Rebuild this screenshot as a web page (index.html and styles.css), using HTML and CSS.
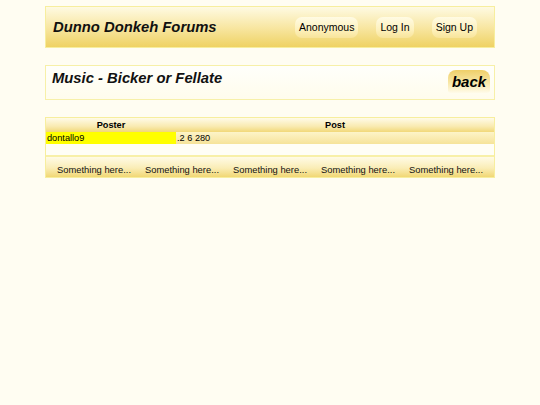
FILE: index.html
```html
<!DOCTYPE html>
<html>
<head>
<meta charset="utf-8">
<link rel="stylesheet" href="styles.css">
</head>
<body>
<div class="page">
  <header class="topbar">
    <h1 class="site-title">Dunno Donkeh Forums</h1>
    <nav class="nav">
      <span class="pill">Anonymous</span>
      <span class="pill">Log In</span>
      <span class="pill">Sign Up</span>
    </nav>
  </header>

  <section class="thread-head">
    <h2 class="thread-title">Music - Bicker or Fellate</h2>
    <span class="back">back</span>
  </section>

  <section class="posts">
    <div class="posts-head">
      <div class="col-poster">Poster</div>
      <div class="col-post">Post</div>
    </div>
    <div class="post-row">
      <div class="poster-cell">dontallo9</div>
      <div class="post-cell">.2 6 280</div>
    </div>
    <div class="post-blank"></div>
    <div class="posts-foot">
      <div>Something here...</div>
      <div>Something here...</div>
      <div>Something here...</div>
      <div>Something here...</div>
      <div>Something here...</div>
    </div>
  </section>
</div>
</body>
</html>
```

FILE: styles.css
```css
html, body {
  margin: 0;
  padding: 0;
  background: #fffdf2;
}
body {
  font-family: "Liberation Sans", Arial, sans-serif;
  color: #000;
}
.page {
  width: 450px;
  margin: 6px auto 0;
}
.topbar {
  box-sizing: border-box;
  height: 42px;
  border: 1px solid #f7ee9e;
  background: linear-gradient(to bottom, #fefae2 0%, #f8e7a4 50%, #efd263 100%);
  display: flex;
  align-items: center;
  justify-content: space-between;
  padding: 0 17px 0 7px;
}
.site-title {
  margin: 0;
  font-size: 14.8px;
  font-weight: bold;
  font-style: italic;
  color: #111;
}
.nav {
  display: flex;
  gap: 18px;
  align-items: center;
}
.pill {
  display: block;
  height: 21px;
  line-height: 21px;
  padding: 0 4px;
  font-size: 10.5px;
  border-radius: 7px;
  background: linear-gradient(to bottom, #fffbe4 0%, #fdf1bd 60%, #f8e49a 100%);
  color: #000;
}
.thread-head {
  box-sizing: border-box;
  margin-top: 17px;
  height: 35px;
  border: 1px solid #f7f0a8;
  background: linear-gradient(to bottom, #fffffb 0%, #fffcec 100%);
  display: flex;
  justify-content: space-between;
  align-items: flex-start;
  padding: 3px 4px 0 6px;
}
.thread-title {
  margin: 0;
  font-size: 14.8px;
  font-weight: bold;
  font-style: italic;
  line-height: 18px;
  color: #111;
}
.back {
  display: block;
  margin-top: 1px;
  width: 42px;
  height: 23px;
  line-height: 24px;
  text-align: center;
  font-size: 15px;
  font-weight: bold;
  font-style: italic;
  border-radius: 8px 8px 3px 3px;
  background: linear-gradient(to bottom, #efcf69 0%, #f8e7a6 55%, #fffbea 100%);
  color: #000;
}
.posts {
  margin-top: 17px;
  border: 1px solid #f7ee9e;
  font-size: 9.2px;
}
.posts-head {
  display: grid;
  grid-template-columns: 130px 1fr;
  height: 14px;
  line-height: 14px;
  font-weight: bold;
  text-align: center;
  background: linear-gradient(to bottom, #fffbe8 0%, #f9eab0 60%, #f1d878 100%);
}
.post-row {
  display: grid;
  grid-template-columns: 130px 1fr;
  height: 12px;
  line-height: 12px;
  background: linear-gradient(to bottom, #fdf4c8 0%, #f6e39a 100%);
}
.poster-cell {
  background: #ffff00;
  padding-left: 1px;
}
.post-cell {
  padding-left: 1px;
}
.post-blank {
  height: 11px;
  background: #fffef6;
  border-bottom: 2px solid #f8f0a8;
}
.posts-foot {
  display: grid;
  grid-template-columns: repeat(5, 1fr);
  height: 20px;
  align-items: end;
  text-align: center;
  font-size: 9.4px;
  line-height: 12px;
  padding: 0 4px 1px;
  box-sizing: border-box;
  background: linear-gradient(to bottom, #fffbe6 0%, #faedb6 55%, #f1d774 100%);
  color: #111;
}
```
